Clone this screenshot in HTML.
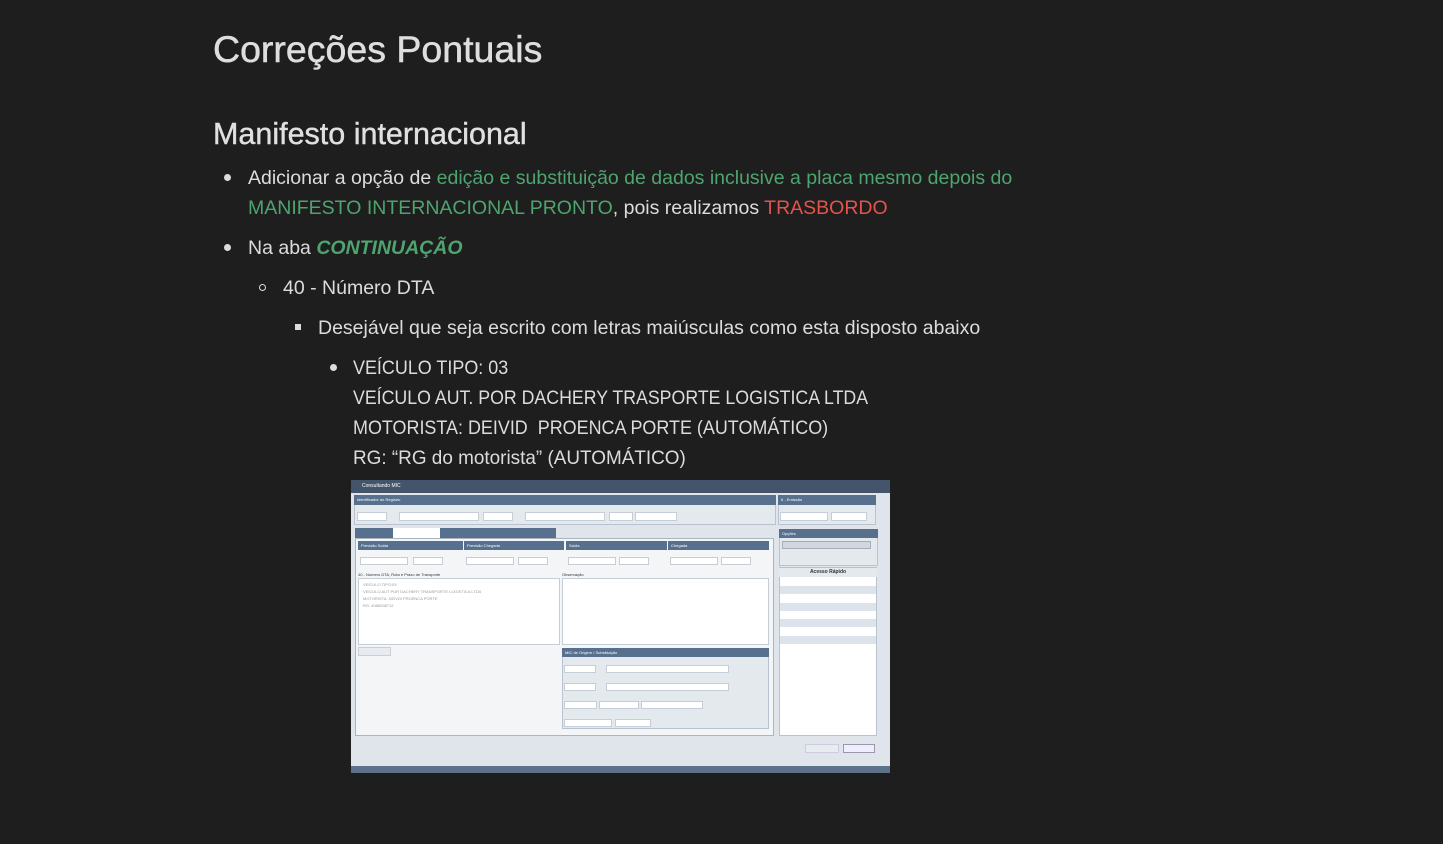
<!DOCTYPE html>
<html><head><meta charset="utf-8"><style>
body{margin:0;width:1443px;height:844px;background:#1e1e1e;overflow:hidden;font-family:"Liberation Sans",sans-serif;color:#dcdcdc;position:relative}
.t{position:absolute;white-space:nowrap;line-height:30px;font-size:19.5px;transform-origin:0 50%}
.g{color:#4ea46f}.r{color:#e5534b}
.b{position:absolute;width:7px;height:7px;border-radius:50%;background:#dcdcdc}
.ss{position:absolute;left:351px;top:480px;width:539px;height:293px;background:#dfe5eb;overflow:hidden;font-size:4px;color:#333}
.ss div{position:absolute;box-sizing:border-box}
.h{background:#56708d;color:#fff;font-size:4px;line-height:9px;padding-left:3px}
.p{background:#e4e9ee;border:1px solid #b8c3cf}
.w{background:#fff;border:1px solid #c5ced8}
</style></head><body>
<div class="t" style="left:213px;top:27px;font-size:37.5px;line-height:44px;color:#dedede;-webkit-text-stroke:0.5px #dedede">Correções Pontuais</div>
<div class="t" style="left:213px;top:115px;font-size:30.5px;line-height:38px;color:#e0e0e0;-webkit-text-stroke:0.4px #e0e0e0">Manifesto internacional</div>
<div class="b" style="left:224px;top:174px"></div>
<div class="t" style="left:248px;top:163px">Adicionar a opção de <span class="g">edição e substituição de dados inclusive a placa mesmo depois do</span></div>
<div class="t" style="left:248px;top:193px"><span class="g">MANIFESTO INTERNACIONAL PRONTO</span>, pois realizamos <span class="r">TRASBORDO</span></div>
<div class="b" style="left:224px;top:244px"></div>
<div class="t" style="left:248px;top:233px">Na aba <i class="g" style="font-weight:bold">CONTINUAÇÃO</i></div>
<div class="b" style="left:259px;top:284px;background:none;border:1.5px solid #dcdcdc;width:5px;height:5px"></div>
<div class="t" style="left:283px;top:273px">40 - Número DTA</div>
<div class="b" style="left:295px;top:324px;border-radius:0;width:6px;height:6px"></div>
<div class="t" style="left:318px;top:313px">Desejável que seja escrito com letras maiúsculas como esta disposto abaixo</div>
<div class="b" style="left:330px;top:364px"></div>
<div class="t" style="left:353px;top:353px;transform:scaleX(0.92)">VEÍCULO TIPO: 03</div>
<div class="t" style="left:353px;top:383px;transform:scaleX(0.91)">VEÍCULO AUT. POR DACHERY TRASPORTE LOGISTICA LTDA</div>
<div class="t" style="left:353px;top:413px;transform:scaleX(0.92)">MOTORISTA: DEIVID&nbsp; PROENCA PORTE (AUTOMÁTICO)</div>
<div class="t" style="left:353px;top:443px;transform:scaleX(0.97)">RG: “RG do motorista” (AUTOMÁTICO)</div>

<div class="ss">
 <div style="left:0;top:0;width:539px;height:13px;background:#44546a;color:#fff;font-size:5px;line-height:13px;padding-left:11px">Consultando MIC</div>
 <div style="left:3px;top:15px;width:422px;height:30px" class="p"></div>
 <div class="h" style="left:3px;top:15px;width:422px;height:10px">Identificador do Registro</div>
 <div class="w" style="left:6px;top:32px;width:30px;height:9px"></div>
 <div class="w" style="left:48px;top:32px;width:80px;height:9px"></div>
 <div class="w" style="left:132px;top:32px;width:30px;height:9px"></div>
 <div class="w" style="left:174px;top:32px;width:80px;height:9px"></div>
 <div class="w" style="left:258px;top:32px;width:24px;height:9px"></div>
 <div class="w" style="left:284px;top:32px;width:42px;height:9px"></div>
 <div style="left:427px;top:15px;width:98px;height:30px" class="p"></div>
 <div class="h" style="left:427px;top:15px;width:98px;height:10px">6 - Emissão</div>
 <div class="w" style="left:429px;top:32px;width:48px;height:9px"></div>
 <div class="w" style="left:480px;top:32px;width:36px;height:9px"></div>
 <div style="left:4px;top:48px;width:201px;height:10px;background:#56708d"></div>
 <div style="left:42px;top:48px;width:47px;height:11px;background:#fff"></div>
 <div style="left:4px;top:58px;width:419px;height:198px;background:#f3f5f7;border:1px solid #a9b5c2"></div>
 <div class="h" style="left:7px;top:61px;width:105px;height:9px">Previsão Saída</div>
 <div class="h" style="left:113px;top:61px;width:100px;height:9px">Previsão Chegada</div>
 <div class="h" style="left:215px;top:61px;width:101px;height:9px">Saída</div>
 <div class="h" style="left:317px;top:61px;width:101px;height:9px">Chegada</div>
 <div class="w" style="left:9px;top:77px;width:48px;height:8px"></div>
 <div class="w" style="left:62px;top:77px;width:30px;height:8px"></div>
 <div class="w" style="left:115px;top:77px;width:48px;height:8px"></div>
 <div class="w" style="left:167px;top:77px;width:30px;height:8px"></div>
 <div class="w" style="left:217px;top:77px;width:48px;height:8px"></div>
 <div class="w" style="left:268px;top:77px;width:30px;height:8px"></div>
 <div class="w" style="left:319px;top:77px;width:48px;height:8px"></div>
 <div class="w" style="left:370px;top:77px;width:30px;height:8px"></div>
 <div style="left:7px;top:92px;font-size:4px">40 - Número DTA, Rota e Prazo de Transporte</div>
 <div style="left:211px;top:92px;font-size:4px">Observação</div>
 <div class="w" style="left:7px;top:98px;width:202px;height:67px;color:#999;padding:2px 4px;line-height:7px">VEÍCULO TIPO:03<br>VEÍCULO AUT POR DACHERY TRANSPORTE LOGISTICA LTDA<br>MOTORISTA: DEIVDI PROENCA PORTE<br>RG: 4088296712</div>
 <div class="w" style="left:211px;top:98px;width:207px;height:67px"></div>
 <div style="left:7px;top:167px;width:33px;height:9px;background:#e8ecf0;border:1px solid #ccd"></div>
 <div style="left:211px;top:168px;width:207px;height:81px" class="p"></div>
 <div class="h" style="left:211px;top:168px;width:207px;height:9px">MIC de Origem / Substituição</div>
 <div class="w" style="left:213px;top:185px;width:32px;height:8px"></div>
 <div class="w" style="left:255px;top:185px;width:123px;height:8px"></div>
 <div class="w" style="left:213px;top:203px;width:32px;height:8px"></div>
 <div class="w" style="left:255px;top:203px;width:123px;height:8px"></div>
 <div class="w" style="left:213px;top:221px;width:33px;height:8px"></div>
 <div class="w" style="left:248px;top:221px;width:40px;height:8px"></div>
 <div class="w" style="left:290px;top:221px;width:62px;height:8px"></div>
 <div class="w" style="left:213px;top:239px;width:48px;height:8px"></div>
 <div class="w" style="left:264px;top:239px;width:36px;height:8px"></div>
 <div class="p" style="left:428px;top:49px;width:99px;height:37px"></div>
 <div class="h" style="left:428px;top:49px;width:99px;height:9px">Opções</div>
 <div style="left:431px;top:61px;width:89px;height:8px;background:#d0d7df;border:1px solid #aab"></div>
 <div style="left:428px;top:87px;width:98px;height:169px;background:#fff;border:1px solid #b8c3cf"></div>
 <div style="left:428px;top:88px;width:98px;height:9px;background:#e4e9ee;text-align:center;font-weight:bold;font-size:5px;line-height:9px">Acesso Rápido</div>
 <div style="left:429px;top:106px;width:96px;height:8px;background:#dde3ea"></div>
 <div style="left:429px;top:123px;width:96px;height:8px;background:#dde3ea"></div>
 <div style="left:429px;top:139px;width:96px;height:8px;background:#dde3ea"></div>
 <div style="left:429px;top:156px;width:96px;height:8px;background:#dde3ea"></div>
 <div style="left:454px;top:264px;width:34px;height:9px;background:#e8ecf0;border:1px solid #ccd"></div>
 <div style="left:492px;top:264px;width:32px;height:9px;background:#eef;border:1px solid #99a"></div>
 <div style="left:0;top:286px;width:539px;height:7px;background:#5d7189"></div>
</div>
</body></html>
